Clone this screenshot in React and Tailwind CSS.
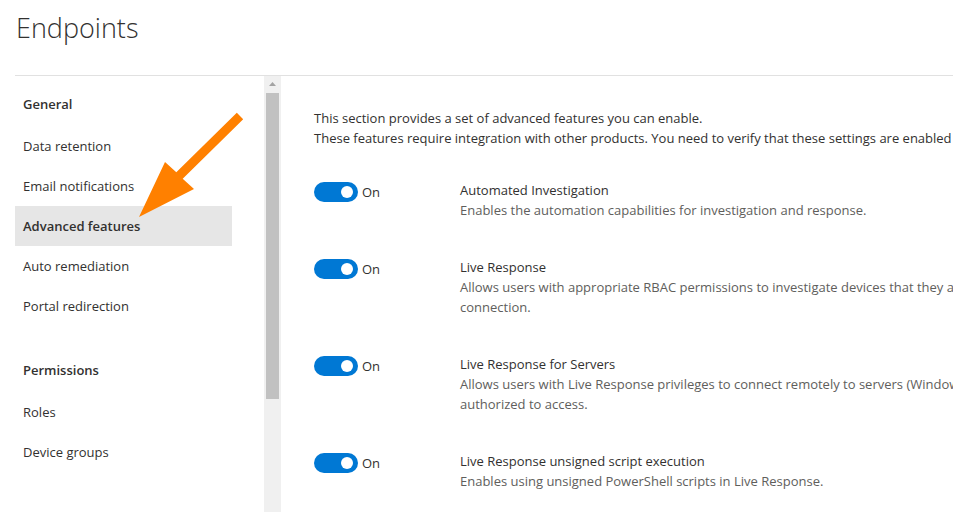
import React from "react";

function NavHeader({ children }) {
  return (
    <div className="h-10 flex items-center pl-2 pt-[2px] text-[13px] font-semibold text-[#323130]">
      {children}
    </div>
  );
}

function NavItem({ children, active }) {
  return (
    <div
      className={
        "h-10 w-[217px] flex items-center pl-2 pt-[2px] text-[13px] text-[#323130] " +
        (active ? "bg-[#e6e6e6] font-semibold" : "")
      }
    >
      {children}
    </div>
  );
}

function Toggle() {
  return (
    <div className="flex items-center gap-1 mt-[2px]">
      <div className="w-[44px] h-[20px] rounded-full bg-[#0078d4] flex items-center justify-end pr-[5px]">
        <div className="w-3 h-3 rounded-full bg-white" />
      </div>
      <span className="text-[13px] text-[#323130] leading-5">On</span>
    </div>
  );
}

function Feature({ title, lines }) {
  return (
    <div className="flex">
      <div className="w-[146px] shrink-0">
        <Toggle />
      </div>
      <div className="text-[13px] leading-5 whitespace-nowrap">
        <div className="text-[#323130]">{title}</div>
        {lines.map((l, i) => (
          <div key={i} className="text-[#605e5c]">
            {l}
          </div>
        ))}
      </div>
    </div>
  );
}

export default function App() {
  return (
    <div className="relative w-[953px] h-[512px] overflow-hidden bg-white font-['Open_Sans','Noto_Sans',sans-serif] text-[#323130]">
      <div className="h-[75px] pl-4 pt-[12px]">
        <h1 className="text-[27px] font-light leading-[32px] text-[#323130]">Endpoints</h1>
      </div>
      <div className="ml-[15px] border-t border-[#e1e1e1] flex h-[437px]">
        <div className="w-[249px] shrink-0 pt-2">
          <NavHeader>General</NavHeader>
          <div className="mt-[2px]">
            <NavItem>Data retention</NavItem>
            <NavItem>Email notifications</NavItem>
            <NavItem active>Advanced features</NavItem>
            <NavItem>Auto remediation</NavItem>
            <NavItem>Portal redirection</NavItem>
          </div>
          <div className="mt-6">
            <NavHeader>Permissions</NavHeader>
          </div>
          <div className="mt-[2px]">
            <NavItem>Roles</NavItem>
            <NavItem>Device groups</NavItem>
          </div>
          <div className="mt-6">
            <NavHeader>APIs</NavHeader>
          </div>
        </div>
        <div className="w-[17px] shrink-0 bg-[#f0f0f0] flex flex-col items-center">
          <svg width="9" height="17" viewBox="0 0 9 17" className="shrink-0">
            <polygon points="1,10 8,10 4.5,6" fill="#a3a3a3" />
          </svg>
          <div className="w-[13px] h-[306px] bg-[#c1c1c1]" />
        </div>
        <div className="flex-1 min-w-0 pl-[33px] pt-8 overflow-hidden">
          <div className="text-[13px] leading-5 whitespace-nowrap text-[#323130]">
            <div>This section provides a set of advanced features you can enable.</div>
            <div>
              These features require integration with other products. You need to verify that these settings are enabled in the other products as well.
            </div>
          </div>
          <div className="mt-8 flex flex-col gap-[37px]">
            <Feature
              title="Automated Investigation"
              lines={["Enables the automation capabilities for investigation and response."]}
            />
            <Feature
              title="Live Response"
              lines={[
                "Allows users with appropriate RBAC permissions to investigate devices that they are authorized to access, using a remote shell",
                "connection.",
              ]}
            />
            <Feature
              title="Live Response for Servers"
              lines={[
                "Allows users with Live Response privileges to connect remotely to servers (Windows Server or Linux devices) that they're",
                "authorized to access.",
              ]}
            />
            <Feature
              title="Live Response unsigned script execution"
              lines={["Enables using unsigned PowerShell scripts in Live Response."]}
            />
          </div>
        </div>
      </div>
      <svg
        className="absolute left-0 top-0 pointer-events-none"
        width="953"
        height="512"
        viewBox="0 0 953 512"
      >
        <polygon
          points="236.8,112.8 243.2,119.2 182.7,178.7 194,189 139,217 165,162 176.3,172.3"
          fill="#ff8000"
        />
      </svg>
    </div>
  );
}
